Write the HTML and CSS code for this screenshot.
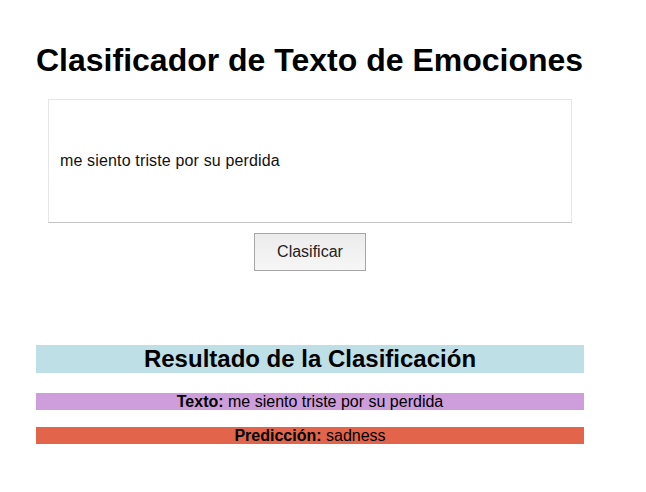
FILE: index.html
```html
<!DOCTYPE html>
<html lang="es">
<head>
<meta charset="utf-8">
<title>Clasificador de Texto de Emociones</title>
<link rel="stylesheet" href="styles.css">
</head>
<body>
<div class="container">
  <h1 class="title">Clasificador de Texto de Emociones</h1>
  <form class="form">
    <input class="text-input" type="text" value="me siento triste por su perdida">
    <button class="btn" type="button">Clasificar</button>
  </form>
  <section class="result">
    <h2 class="result-title">Resultado de la Clasificación</h2>
    <p class="row row-text"><strong>Texto:</strong> me siento triste por su perdida</p>
    <p class="row row-pred"><strong>Predicción:</strong> sadness</p>
  </section>
</div>
</body>
</html>
```
FILE: styles.css
```css
html, body {
  margin: 0;
  padding: 0;
  background: #ffffff;
}
body {
  font-family: "Liberation Sans", Arial, sans-serif;
  color: #000;
}
.container {
  width: 548px;
  margin-left: 36px;
  padding-top: 21px;
}
.title {
  font-size: 32px;
  font-weight: bold;
  margin: 21px 0 0 0;
  line-height: 37px;
}
.form {
  display: flex;
  flex-direction: column;
  align-items: center;
  margin-top: 20px;
}
.text-input {
  box-sizing: border-box;
  width: 524px;
  height: 124px;
  border: 1px solid #e6e6e6;
  border-bottom-color: #c4c4c4;
  padding: 0 11px;
  font-family: "Liberation Sans", Arial, sans-serif;
  font-size: 16px;
  letter-spacing: 0.15px;
  color: #111;
  background: #fff;
  outline: none;
}
.btn {
  box-sizing: border-box;
  margin-top: 10px;
  width: 112px;
  height: 38px;
  border: 1px solid #a6a6a6;
  background: linear-gradient(#ececec, #f6f6f6);
  font-family: "Liberation Sans", Arial, sans-serif;
  font-size: 16px;
  color: #222;
  padding: 0;
}
.result {
  margin-top: 74px;
}
.result-title {
  margin: 0;
  background: #bddfe5;
  text-align: center;
  font-size: 24px;
  line-height: 28px;
  font-weight: bold;
}
.row {
  margin: 20px 0 0 0;
  text-align: center;
  font-size: 16px;
  line-height: 17px;
}
.row-text {
  background: #cd9edb;
}
.row-pred {
  margin-top: 17px;
  background: #e2654b;
}
```
